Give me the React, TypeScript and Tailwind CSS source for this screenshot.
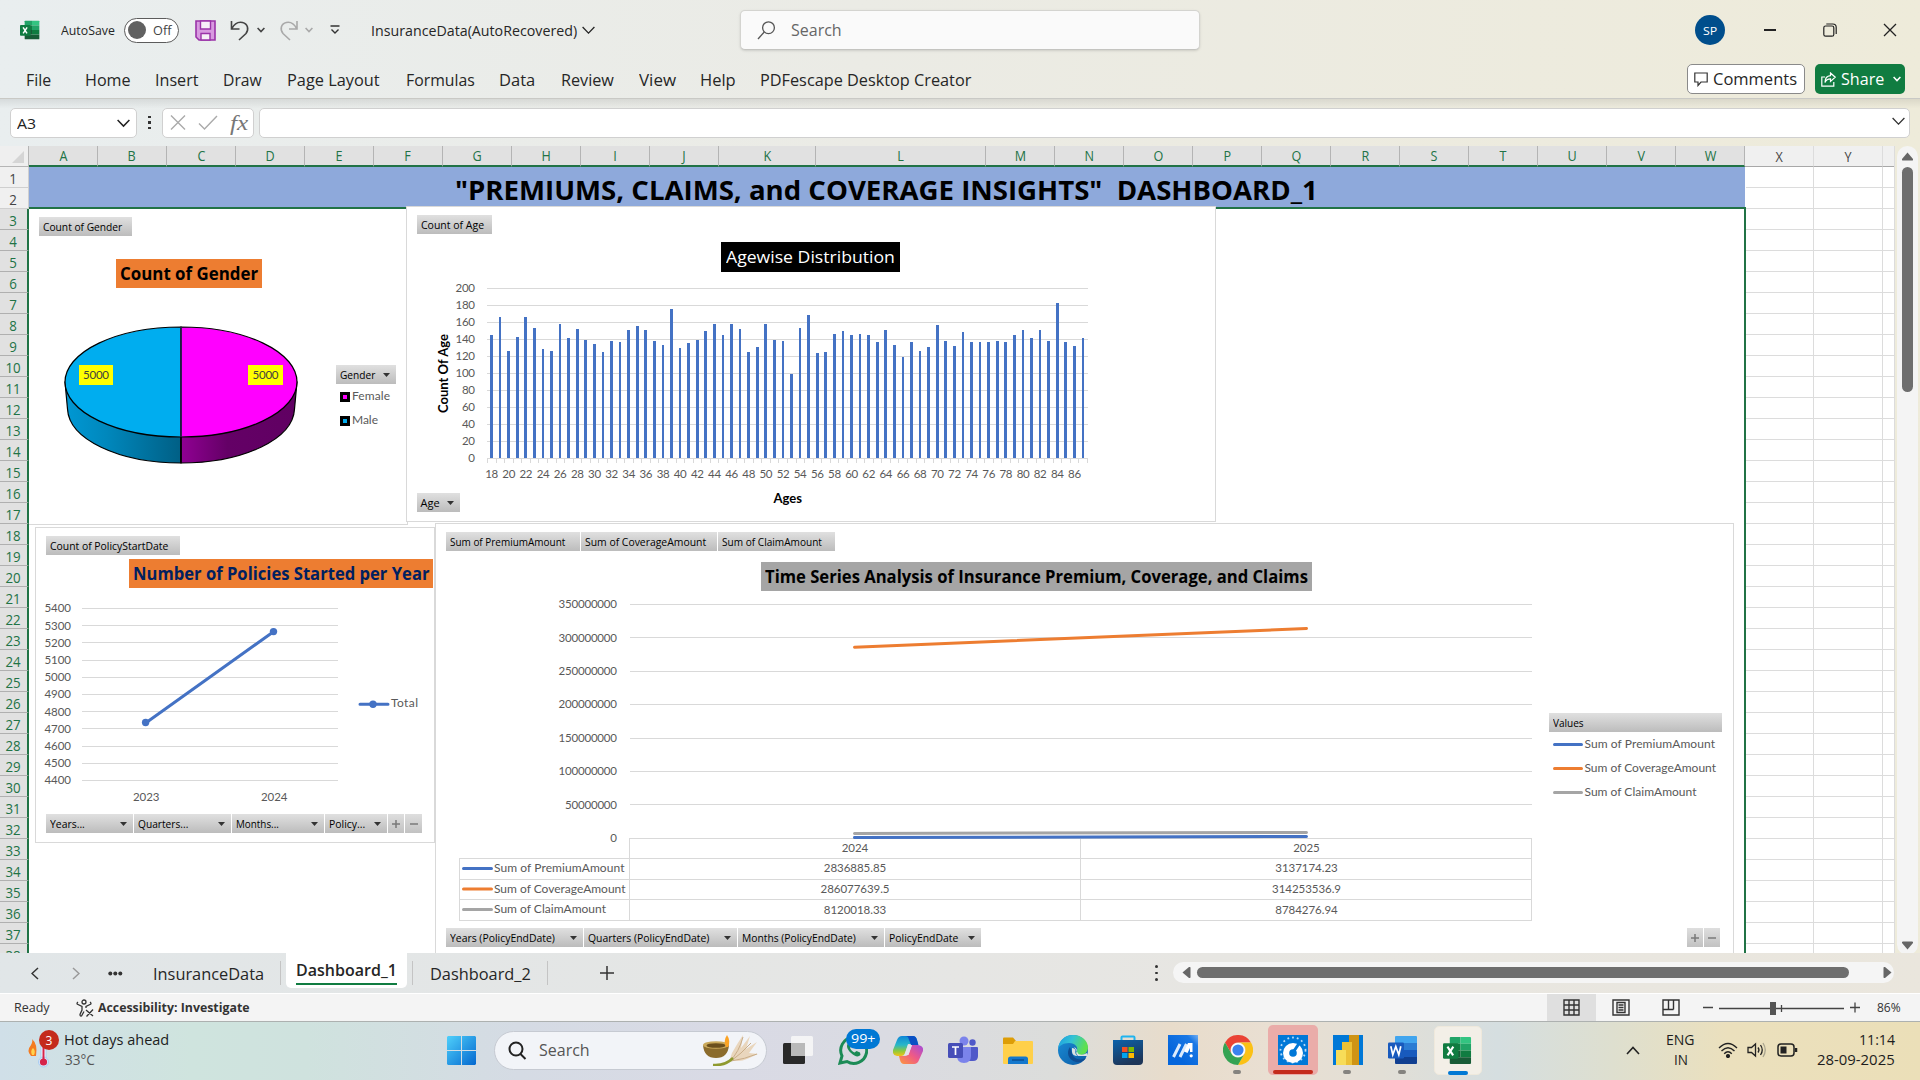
import React, { useLayoutEffect, useRef, useState } from "react";

/* Text squeezed or stretched horizontally to the width of its box. */
function Fit({ className, children }: { className: string; children: React.ReactNode }) {
  const box = useRef<HTMLSpanElement>(null);
  const inner = useRef<HTMLSpanElement>(null);
  const [k, setK] = useState(1);
  useLayoutEffect(() => {
    if (box.current && inner.current) {
      const w = inner.current.offsetWidth;
      if (w) setK(box.current.offsetWidth / w);
    }
  }, []);
  return (
    <span ref={box} className={"block shrink-0 " + className}>
      <span ref={inner} className="inline-block origin-left whitespace-pre" style={{ transform: `scaleX(${k})` }}>
        {children}
      </span>
    </span>
  );
}

function Chevron({ className, w = 12, s = 1.3 }: { className?: string; w?: number; s?: number }) {
  return (
    <svg className={"shrink-0 " + (className ?? "")} width={w} height={w / 2 + 2} viewBox={`0 0 ${w} ${w / 2 + 2}`} fill="none" stroke="currentColor" strokeWidth={s}>
      <path d={`M.6 1 L${w / 2} ${w / 2 + 0.6} L${w - 0.6} 1`} />
    </svg>
  );
}

function ExcelIcon({ size }: { size: number }) {
  return (
    <svg width={size} height={size} viewBox="0 0 30 30" className="shrink-0">
      <path d="M8 1h10v7H7V2q0-1 1-1z" fill="#21a366" />
      <path d="M18 1h10q1 0 1 1v6H18z" fill="#33c481" />
      <path d="M7 8h11v7H7z" fill="#107c41" />
      <path d="M18 8h11v7H18z" fill="#21a366" />
      <path d="M7 15h11v7H7z" fill="#185c37" />
      <path d="M18 15h11v7H18z" fill="#107c41" />
      <path d="M7 22h22v6q0 1-1 1H8q-1 0-1-1z" fill="#185c37" />
      <rect x="0" y="7.5" width="16" height="16" rx="1.3" fill="#107c41" />
      <path d="M4.6 11l5.900 9M10.700 11l-6 9" stroke="#fff" strokeWidth="2.200" />
    </svg>
  );
}

function WordIcon() {
  return (
    <svg width="30" height="30" viewBox="0 0 30 30" className="shrink-0">
      <path d="M8 1h20q1 0 1 1v6H7V2q0-1 1-1z" fill="#41a5ee" />
      <path d="M7 8h22v7H7z" fill="#2b7cd3" />
      <path d="M7 15h22v7H7z" fill="#185abd" />
      <path d="M7 22h22v6q0 1-1 1H8q-1 0-1-1z" fill="#103f91" />
      <rect x="0" y="7.500" width="16" height="16" rx="1.300" fill="#185abd" />
      <path d="M2.800 11.300l2 8.400 3-8.200 3 8.200 2-8.400" stroke="#fff" strokeWidth="1.700" fill="none" />
    </svg>
  );
}

/* ---------- title bar, menu, formula bar ---------- */

function TitleBar() {
  return (
    <div className="flex h-[60px] items-center text-[#262626]">
      <div className="ml-5"><ExcelIcon size={20} /></div>
      <Fit className="ml-[21px] w-[54px] pt-px text-[13px]">AutoSave</Fit>
      <div className="ml-[9px] flex h-[25px] w-[55px] items-center rounded-full border border-[#5c5c5c] bg-white">
        <div className="ml-[3px] size-[18px] rounded-full bg-[#616161]" />
        <Fit className="ml-[7px] w-[18px] pt-px text-[12px] text-[#444]">Off</Fit>
      </div>
      <svg className="ml-4 shrink-0" width="21" height="21" viewBox="0 0 21 21">
        <path d="M1 1h19v19H4l-3-3z" fill="#d89ae0" stroke="#9a33a8" strokeWidth="1.600" />
        <path d="M5.500 1h10v8h-10z" fill="#f7eff8" stroke="#9a33a8" strokeWidth="1.400" />
        <path d="M6 20v-6.500h9V20z" fill="#f7eff8" stroke="#9a33a8" strokeWidth="1.400" />
      </svg>
      <svg className="ml-[14px] shrink-0" width="20" height="21" viewBox="0 0 20 21" fill="none" stroke="#444" strokeWidth="1.600">
        <path d="M1.500 1v8h8M1.800 8.600C4 4.500 8 1.500 12.500 2.500c5.500 1.300 6.500 7 3.500 11L9 20" />
      </svg>
      <Chevron className="ml-[7px] text-[#444]" w={8} s={1.6} />
      <svg className="ml-[14px] shrink-0" width="20" height="21" viewBox="0 0 20 21" fill="none" stroke="#a9a9a9" strokeWidth="1.600">
        <path d="M18 1v8h-8M17.700 8.600C15.500 4.500 11.500 1.500 7.300 2.500c-5.500 1.300-6.500 7-3.300 11L11 20" />
      </svg>
      <Chevron className="ml-[6px] text-[#a9a9a9]" w={8} s={1.6} />
      <svg className="ml-[17px] shrink-0" width="10" height="10" viewBox="0 0 10 10" fill="none" stroke="#333" strokeWidth="1.400">
        <path d="M0.500 1h9M1.500 4.500l3.500 3.500 3.500-3.500" />
      </svg>
      <Fit className="ml-[31px] w-[206px] pt-px text-[14.5px]">InsuranceData(AutoRecovered)</Fit>
      <Chevron className="ml-[5px]" w={13} />
      <div className="ml-[145px] flex h-[40px] w-[460px] items-center rounded-[5px] border border-[#d4d4d0] border-b-[#c4c4c0] bg-[#fafafa] shadow-sm">
        <svg className="ml-4 shrink-0" width="19" height="19" viewBox="0 0 19 19" fill="none" stroke="#555" strokeWidth="1.300">
          <circle cx="11.500" cy="6.700" r="5.900" /><path d="M7.300 11L1 18" />
        </svg>
        <Fit className="ml-[15px] w-[51px] text-[16px] leading-[20px] text-[#666]">Search</Fit>
      </div>
      <div className="ml-[495px] flex size-[30px] shrink-0 items-center justify-center rounded-full bg-[#004e8c] text-white">
        <Fit className="w-[14px] pt-px text-[11.5px]">SP</Fit>
      </div>
      <div className="ml-[39px] h-[1.5px] w-[12px] bg-[#222]" />
      <svg className="ml-[47px] shrink-0" width="14" height="14" viewBox="0 0 14 14" fill="none" stroke="#222" strokeWidth="1.200">
        <rect x=".8" y="3" width="10" height="10.200" rx="1.800" /><path d="M3.300 1h6.500q3.400 0 3.400 3.400V11" />
      </svg>
      <svg className="ml-[46px] shrink-0" width="14" height="14" viewBox="0 0 14 14" stroke="#222" strokeWidth="1.300"><path d="M1 1l12 12M13 1L1 13" /></svg>
    </div>
  );
}

function MenuBar() {
  return (
    <div className="flex h-[38px] items-center text-[16.500px] text-[#262626]">
      <div className="flex pt-[2px]">
        <Fit className="ml-[26px] w-[25px]">File</Fit>
        <Fit className="ml-[34px] w-[46px]">Home</Fit>
        <Fit className="ml-[24px] w-[43px]">Insert</Fit>
        <Fit className="ml-[25px] w-[39px]">Draw</Fit>
        <Fit className="ml-[25px] w-[93px]">Page Layout</Fit>
        <Fit className="ml-[26px] w-[69px]">Formulas</Fit>
        <Fit className="ml-[24px] w-[36px]">Data</Fit>
        <Fit className="ml-[26px] w-[53px]">Review</Fit>
        <Fit className="ml-[25px] w-[37px]">View</Fit>
        <Fit className="ml-[24px] w-[36px]">Help</Fit>
        <Fit className="ml-[24px] w-[211px]">PDFescape Desktop Creator</Fit>
      </div>
      <div className="ml-[716px] flex h-[30px] w-[118px] items-center rounded-[5px] border border-[#8a8a8a] bg-white">
        <svg className="ml-[6px] shrink-0" width="14" height="15" viewBox="0 0 14 15" fill="none" stroke="#333" strokeWidth="1.200">
          <path d="M.8 1h12.400v9H7l-3 3.500V10H.8z" />
        </svg>
        <Fit className="ml-[5px] w-[84px]">Comments</Fit>
      </div>
      <div className="ml-[10px] flex h-[30px] w-[90px] items-center rounded-[5px] bg-[#107c41] text-white">
        <svg className="ml-[6px] shrink-0" width="15" height="15" viewBox="0 0 15 15" fill="none" stroke="#fff" strokeWidth="1.200">
          <path d="M4 5H.8v9.200h12V10" /><path d="M9.500 1l4.700 4.200-4.700 4.200V6.800C6.500 6.800 5 8 4 10.500 4 6.500 6 4 9.500 3.700z" />
        </svg>
        <Fit className="ml-[5px] w-[43px]">Share</Fit>
        <Chevron className="ml-[9px]" w={8} s={1.5} />
      </div>
    </div>
  );
}

function FormulaBar() {
  return (
    <div className="flex h-[48px] items-center border-t border-[#c9c9c5] bg-linear-to-b from-black/8 via-transparent via-20% to-transparent">
      <div className="ml-[10px] flex h-[30px] w-[127px] shrink-0 items-center rounded-[5px] border border-[#d0d0d0] bg-white text-[#222]">
        <Fit className="ml-[6px] w-[19px] pt-px text-[15px]">A3</Fit>
        <Chevron className="mt-[2px] ml-[81px]" w={13} s={1.5} />
      </div>
      <div className="ml-[11px] flex flex-col gap-[3px]">
        <i className="size-[2.500px] bg-[#333]" /><i className="size-[2.500px] bg-[#333]" /><i className="size-[2.500px] bg-[#333]" />
      </div>
      <div className="ml-[11px] flex h-[30px] w-[92px] shrink-0 items-center rounded-[5px] border border-[#d0d0d0] bg-white">
        <svg className="ml-[7px] shrink-0" width="16" height="15" viewBox="0 0 16 15" stroke="#aaa" strokeWidth="1.400"><path d="M1 .5l14 14M15 .5L1 14.500" /></svg>
        <svg className="ml-[12px] shrink-0" width="20" height="15" viewBox="0 0 20 15" fill="none" stroke="#aaa" strokeWidth="1.400"><path d="M1 8.500l5.500 5.500L19 1" /></svg>
        <Fit className="ml-[12px] w-[18px] font-[Liberation_Serif] text-[21px] leading-[22px] italic text-[#777]">fx</Fit>
      </div>
      <div className="ml-[5px] flex h-[30px] w-[1651px] items-center justify-end rounded-[5px] border border-[#d0d0d0] bg-white pr-[4px] pb-[3px] text-[#333]">
        <Chevron w={13} s={1.3} />
      </div>
    </div>
  );
}

/* ---------- worksheet ---------- */

const COLS: [string, number][] = "ABCDEFGHIJKLMNOPQRSTUVWXY".split("").map((c) => [c, c === "K" ? 97 : c === "L" ? 170 : 69]);
const ROWS = Array.from({ length: 38 }, (_, i) => i + 1);

function ColumnHeaders() {
  return (
    <div className="flex h-[21px] text-[14px]">
      <div className="flex w-[29px] items-end justify-end border-r border-b border-[#b5b5b5] bg-[#efefef] pr-[4px] pb-[3px]">
        <svg width="12" height="12"><path d="M12 0v12H0z" fill="#d5d5d5" /></svg>
      </div>
      {COLS.map(([c, w]) => {
        const sel = c < "X";
        return (
          <div key={c} style={{ width: w }} className={"flex shrink-0 items-center justify-center border-r " + (sel ? "border-b-2 border-r-[#b4b4b4] border-b-[#217346] bg-[#e1e1e1] text-[#217346]" : "border-b border-r-[#dcdcdc] border-b-[#a8a8a8] bg-[#f0f0f0] text-[#444]")}>
            <span className="scale-x-90">{c}</span>
          </div>
        );
      })}
      <div className="grow border-b border-[#a8a8a8] bg-[#f0f0f0]" />
    </div>
  );
}

function RowHeaders() {
  return (
    <div className="flex w-[29px] shrink-0 flex-col bg-[#e1e1e1] text-[14px]">
      {ROWS.map((r) => (
        <div key={r} className={"flex h-[21px] shrink-0 items-center justify-center border-b " + (r < 3 ? "border-r border-[#cfcfcf] bg-[#f0f0f0] pr-px text-[#444]" : "border-r-2 border-r-[#217346] border-b-[#b0b0b0] text-[#217346]")}>
          <span className="scale-x-95 pt-[2px]">{r}</span>
        </div>
      ))}
    </div>
  );
}

function PivotButton({ className, w, label, arrow }: { className: string; w: string; label: string; arrow?: boolean }) {
  return (
    <div className={"flex h-[19px] shrink-0 items-center bg-linear-to-b from-[#e0e0e0] to-[#bcbcbc] pl-[3.5px] text-[11px] leading-[14px] text-black " + className}>
      <Fit className={w}>{label}</Fit>
      {arrow && <svg className="mr-[6px] ml-auto shrink-0" width="7" height="4"><path d="M0 0h7L3.500 4z" fill="#333" /></svg>}
    </div>
  );
}

function Sign({ minus, className }: { minus?: boolean; className: string }) {
  return (
    <div className={"flex h-[19px] shrink-0 items-center justify-center bg-linear-to-b from-[#dedede] to-[#c2c2c2] " + className}>
      <svg width="8" height="8" stroke="#7a7a7a" strokeWidth="1.500"><path d={minus ? "M0 4h8" : "M0 4h8M4 0v8"} /></svg>
    </div>
  );
}

function ChartTitle({ className, w, children }: { className: string; w: string; children: string }) {
  return (
    <div className={"absolute flex items-center justify-center text-[17px] leading-[24px] " + className}>
      <Fit className={w}>{children}</Fit>
    </div>
  );
}

/* Chart drawings use the window's coordinate system, offset by each panel's viewBox. */
function GenderChart() {
  return (
    <div className="absolute top-[42px] left-0 h-[316px] w-[379px] border-r border-b border-[#d9d9d9] bg-white">
      <svg className="absolute top-0 left-0 font-[Lato]" width="378" height="315" viewBox="29 209 378 315">
        <defs>
          <linearGradient id="m" x1="0" x2="1"><stop offset="0" stopColor="#0098d4" /><stop offset=".35" stopColor="#0088bd" /><stop offset="1" stopColor="#005f85" /></linearGradient>
          <linearGradient id="f" x1="0" x2="1"><stop offset="0" stopColor="#900093" /><stop offset=".4" stopColor="#640066" /><stop offset="1" stopColor="#600062" /></linearGradient>
        </defs>
        <g stroke="#000" strokeWidth="1.200">
          <path d="M65 382L67.500 409C69 439 118 463 181 463V382z" fill="url(#m)" />
          <path d="M297 382L294.500 409C293 439 244 463 181 463V382z" fill="url(#f)" />
          <path d="M181 327A116 55 0 0 0 181 437z" fill="#00adef" />
          <path d="M181 327A116 55 0 0 1 181 437z" fill="#ff00ff" />
        </g>
        <path d="M181 327V437" stroke="#26224d" strokeWidth="1.500" />
        <path d="M181 437V463" stroke="#000" strokeWidth="1.500" />
        <path d="M79 365h34v20H79zM248 365h35v20h-35z" fill="#ff0" />
        <g fontSize="11.500" fill="#404040">
          <text x="83" y="379" textLength="26">5000</text>
          <text x="252.500" y="379" textLength="26">5000</text>
        </g>
        <g fontSize="12" fill="#595959">
          <text x="352" y="400" textLength="38">Female</text>
          <text x="352" y="424" textLength="26">Male</text>
        </g>
        <rect x="341.500" y="393.500" width="7" height="7" fill="#f0f" stroke="#000" strokeWidth="3" />
        <rect x="341.500" y="417.500" width="7" height="7" fill="#00adef" stroke="#000" strokeWidth="3" />
      </svg>
      <PivotButton className="absolute top-[8px] left-[10px] w-[93px]" w="w-[79px]" label="Count of Gender" />
      <ChartTitle className="top-[50px] left-[87px] h-[29px] w-[146px] bg-[#ed7d31] font-bold text-black" w="w-[138px]">Count of Gender</ChartTitle>
      <PivotButton className="absolute top-[156px] left-[307px] w-[60px]" w="w-[35px]" label="Gender" arrow />
    </div>
  );
}

const AGES = [
  145, 167, 127, 143, 166, 153, 129, 126, 158, 142, 152, 139, 135, 125, 138, 137, 151, 156, 151, 138, 133, 176, 130, 136, 140, 150, 158, 145, 158, 152, 125, 131, 158, 139, 138,
  100, 153, 169, 124, 125, 147, 150, 145, 147, 145, 137, 151, 133, 120, 137, 127, 131, 157, 138, 132, 149, 137, 137, 137, 138, 137, 145, 151, 142, 151, 138, 183, 137, 132, 142,
];

function AgeChart() {
  const step = 600 / 70;
  return (
    <div className="absolute top-[39px] left-[377px] h-[316px] w-[810px] border border-[#d9d9d9] bg-white">
      <svg className="absolute top-0 left-0 font-[Lato]" width="808" height="314" viewBox="407 207 808 314">
        <g stroke="#d9d9d9" shapeRendering="crispEdges">
          {AGES.slice(0, 11).map((_, i) => <path key={i} d={`M487 ${288.500 + i * 17}H1087.500`} />)}
          {Array.from({ length: 71 }, (_, i) => <path key={i} d={`M${487.500 + i * step} 459v4`} />)}
        </g>
        <g fill="#4472c4" shapeRendering="crispEdges">
          {AGES.map((v, i) => <rect key={i} x={487.200 + step * (i + 0.5) - 1.350} y={458.500 - v * 0.850} width="2.700" height={v * 0.850 - 0.500} />)}
        </g>
        <g fontSize="11.500" fill="#595959">
          {Array.from({ length: 11 }, (_, i) => {
            const s = String(200 - i * 20);
            return <text key={i} x="475" y={292.300 + i * 17} textAnchor="end" textLength={s.length * 6.500}>{s}</text>;
          })}
          {Array.from({ length: 35 }, (_, i) => <text key={i} x={491.700 + i * step * 2} y="478" textAnchor="middle" textLength="13">{18 + i * 2}</text>)}
        </g>
        <g fontSize="13" fontWeight="bold" fill="#000">
          <text transform="translate(448 413) rotate(-90)" textLength="79" lengthAdjust="spacingAndGlyphs">Count Of Age</text>
          <text x="773.500" y="503" textLength="28.500" lengthAdjust="spacingAndGlyphs">Ages</text>
        </g>
      </svg>
      <PivotButton className="absolute top-[8px] left-[10px] w-[75px]" w="w-[63px]" label="Count of Age" />
      <ChartTitle className="top-[35px] left-[314px] h-[30px] w-[179px] bg-black text-white" w="w-[169px]">Agewise Distribution</ChartTitle>
      <PivotButton className="absolute top-[286px] left-[10px] w-[43px]" w="w-[19px]" label="Age" arrow />
    </div>
  );
}

function PolicyChart() {
  return (
    <div className="absolute top-[360px] left-[6px] h-[316px] w-[400px] border border-[#d9d9d9] bg-white">
      <svg className="absolute top-0 left-0 font-[Lato]" width="398" height="314" viewBox="36 528 398 314">
        <g stroke="#d9d9d9" shapeRendering="crispEdges">
          {AGES.slice(0, 11).map((_, i) => <path key={i} d={`M82 ${608.500 + i * 17.200}H337.500`} />)}
        </g>
        <g fontSize="11.500" fill="#595959">
          {AGES.slice(0, 11).map((_, i) => <text key={i} x="44.500" y={612.300 + i * 17.200} textLength="26.500">{5400 - i * 100}</text>)}
          <text x="133" y="801" textLength="26.500">2023</text>
          <text x="261" y="801" textLength="26.500">2024</text>
          <text x="391" y="707.200" fontSize="12" textLength="27">Total</text>
        </g>
        <path d="M146 722.800L273.800 631.500M360 704.300h28" stroke="#4472c4" strokeWidth="3" strokeLinecap="round" />
        <g fill="#4472c4"><circle cx="145.600" cy="722.500" r="3.700" /><circle cx="273.500" cy="631.600" r="3.700" /><circle cx="373" cy="704.300" r="3.700" /></g>
      </svg>
      <PivotButton className="absolute top-[8px] left-[10px] w-[134px]" w="w-[118px]" label="Count of PolicyStartDate" />
      <ChartTitle className="top-[31px] left-[93px] h-[29px] w-[304px] bg-[#ed7d31] font-bold text-[#002060]" w="w-[296px]">Number of Policies Started per Year</ChartTitle>
      <div className="absolute top-[286px] left-[10px] flex gap-px">
        <PivotButton className="w-[87px]" w="w-[35px]" label="Years..." arrow />
        <PivotButton className="w-[97px]" w="w-[50px]" label="Quarters..." arrow />
        <PivotButton className="w-[92px]" w="w-[43px]" label="Months..." arrow />
        <PivotButton className="w-[62px]" w="w-[36px]" label="Policy..." arrow />
        <Sign className="w-[16px]" />
        <Sign className="w-[17px]" minus />
      </div>
    </div>
  );
}

const SERIES: [string, string, string, string, number][] = [
  ["Sum of PremiumAmount", "#4472c4", "2836885.85", "3137174.23", 130.5],
  ["Sum of CoverageAmount", "#ed7d31", "286077639.5", "314253536.9", 131.5],
  ["Sum of ClaimAmount", "#a5a5a5", "8120018.33", "8784276.94", 112],
];

function TimeChart() {
  return (
    <div className="absolute top-[356px] left-[406px] h-[440px] w-[1299px] border border-[#d9d9d9] bg-white">
      <svg className="absolute top-0 left-0 font-[Lato]" width="1297" height="430" viewBox="436 524 1297 430">
        <g stroke="#d9d9d9" fill="none" shapeRendering="crispEdges">
          {AGES.slice(0, 8).map((_, i) => <path key={i} d={`M629.500 ${604.500 + i * 33.400}H1531.500`} />)}
          <path d="M459 858.500H1531.500M459 879.500H1531.500M459 899.500H1531.500M459 920.500H1531.500M459.500 858V921M629.500 838V921M1080.500 838V921M1531.500 838V921" />
        </g>
        <g fontSize="11.500" fill="#595959">
          {Array.from({ length: 8 }, (_, i) => {
            const s = String(350000000 - i * 50000000);
            return <text key={i} x="617" y={608.200 + i * 33.400} textAnchor="end" textLength={s.length * 6.500}>{s}</text>;
          })}
          <text x="855" y="852" textAnchor="middle" textLength="26.500">2024</text>
          <text x="1306.500" y="852" textAnchor="middle" textLength="26.500">2025</text>
          {SERIES.map(([n, c, a, b, w], i) => (
            <g key={n}>
              <path d={`M463.500 ${868.500 + i * 20.500}h28M1554.500 ${744.500 + i * 24}h27`} stroke={c} strokeWidth="3" strokeLinecap="round" />
              <text x="494" y={872 + i * 20.500} fontSize="12" textLength={w}>{n}</text>
              <text x="1584.500" y={748 + i * 24} fontSize="12" textLength={w}>{n}</text>
              <text x="855" y={872 + i * 20.900} textAnchor="middle" textLength={i === 1 ? 69 : 62.500}>{a}</text>
              <text x="1306.500" y={872 + i * 20.900} textAnchor="middle" textLength={i === 1 ? 69 : 62.500}>{b}</text>
            </g>
          ))}
        </g>
        <g fill="none" strokeWidth="3" strokeLinecap="round">
          <path d="M854.500 837.500L1306.500 836.500" stroke="#4472c4" />
          <path d="M854.500 647.300L1306.500 628.500" stroke="#ed7d31" />
          <path d="M854.500 833.400L1306.500 832.500" stroke="#a5a5a5" />
        </g>
      </svg>
      <div className="absolute top-[8px] left-[10px] flex gap-px">
        <PivotButton className="w-[134px]" w="w-[115px]" label="Sum of PremiumAmount" />
        <PivotButton className="w-[136px]" w="w-[121px]" label="Sum of CoverageAmount" />
        <PivotButton className="w-[117px]" w="w-[100px]" label="Sum of ClaimAmount" />
      </div>
      <ChartTitle className="top-[38px] left-[325px] h-[29px] w-[551px] bg-[#a5a5a5] font-bold text-black" w="w-[543px]">Time Series Analysis of Insurance Premium, Coverage, and Claims</ChartTitle>
      <PivotButton className="absolute top-[189px] left-[1113px] w-[173px]" w="w-[31px]" label="Values" />
      <div className="absolute top-[404px] left-[10px] flex gap-px">
        <PivotButton className="w-[137px]" w="w-[105px]" label="Years (PolicyEndDate)" arrow />
        <PivotButton className="w-[153px]" w="w-[121px]" label="Quarters (PolicyEndDate)" arrow />
        <PivotButton className="w-[146px]" w="w-[114px]" label="Months (PolicyEndDate)" arrow />
        <PivotButton className="w-[96px]" w="w-[69px]" label="PolicyEndDate" arrow />
      </div>
      <div className="absolute top-[404px] left-[1251px] flex gap-px">
        <Sign className="w-[16px]" /><Sign className="w-[16px]" minus />
      </div>
    </div>
  );
}

function Sheet() {
  return (
    <div className="flex h-[807px] w-[1895px] shrink-0 flex-col overflow-hidden border-r border-[#dcdcdc] bg-white">
      <ColumnHeaders />
      <div className="flex h-[786px] overflow-hidden">
        <RowHeaders />
        <div className="relative w-[1717px] shrink-0 overflow-hidden bg-white">
          <div className="flex h-[40px] w-[1716px] items-center bg-[#8ea9db] pl-[426px]">
            <Fit className="w-[863px] pt-[5px] text-[27.500px] leading-[36px] font-bold text-black">{'"PREMIUMS, CLAIMS, and COVERAGE INSIGHTS"  DASHBOARD_1'}</Fit>
          </div>
          <div className="h-[750px] border-t-2 border-r-2 border-[#217346]" />
          <TimeChart />
          <GenderChart />
          <PolicyChart />
          <AgeChart />
        </div>
        <div className="flex grow flex-col">
          {ROWS.map((r) => (
            <div key={r} className="flex h-[21px] shrink-0 border-b border-[#dcdcdc]">
              <div className="w-[68px] border-r border-[#dcdcdc]" /><div className="w-[69px] border-r border-[#dcdcdc]" />
            </div>
          ))}
        </div>
      </div>
    </div>
  );
}

function VScroll() {
  return (
    <div className="ml-[2px] flex h-[809px] w-[21px] flex-col items-center rounded-full bg-[#f4f4f4] pt-[6px] pb-[5px]">
      <svg width="11" height="9"><path d="M5.500 .5L11 7q.3 1.500-1 1.500H1Q-.3 8.500 0 7z" fill="#666" /></svg>
      <div className="mt-[6px] h-[225px] w-[11px] rounded-full bg-[#6e6e6e]" />
      <svg className="mt-auto" width="11" height="9"><path d="M5.500 8.500L11 2Q11.300 .5 10 .5H1Q-.3 .5 0 2z" fill="#666" /></svg>
    </div>
  );
}

function TabStrip() {
  return (
    <div className="flex h-[40px] items-start bg-linear-to-r from-[#e1e6e8] via-[#e6e6e4] to-[#eae6dd] text-[#262626]">
      <div className="flex h-[40px] items-center">
        <svg className="ml-[31px]" width="8" height="13" fill="none" stroke="#333" strokeWidth="1.500"><path d="M7 1L1 6.500l6 5.500" /></svg>
        <svg className="ml-[33px]" width="8" height="13" fill="none" stroke="#999" strokeWidth="1.500"><path d="M1 1l6 5.500L1 12" /></svg>
        <svg className="ml-[28px]" width="15" height="5" fill="#333"><circle cx="2.300" cy="2.500" r="2" /><circle cx="7.300" cy="2.500" r="2" /><circle cx="12.300" cy="2.500" r="2" /></svg>
        <Fit className="ml-[30px] w-[111px] pt-[2px] text-[16.500px]">InsuranceData</Fit>
        <div className="ml-[16px] h-[24px] w-px bg-[#c4c4c4]" />
      </div>
      <div className="ml-[5px] flex h-[35px] w-[121px] flex-col items-center rounded-b-[5px] bg-white pt-[5px]">
        <Fit className="w-[101px] text-[16.500px] leading-[24px] font-semibold">Dashboard_1</Fit>
        <div className="mt-[1px] h-[2px] w-[101px] shrink-0 bg-[#107c41]" />
      </div>
      <div className="flex h-[40px] grow items-center">
        <div className="ml-[5px] h-[24px] w-px bg-[#c4c4c4]" />
        <Fit className="ml-[17px] w-[101px] pt-[2px] text-[16.500px]">Dashboard_2</Fit>
        <div className="ml-[16px] h-[24px] w-px bg-[#c4c4c4]" />
        <svg className="ml-[52px]" width="14" height="14" stroke="#333" strokeWidth="1.500"><path d="M0 7h14M7 0v14" /></svg>
        <div className="ml-[541px] flex flex-col gap-[4px]">
          <i className="size-[2.500px] rounded-full bg-[#333]" /><i className="size-[2.500px] rounded-full bg-[#333]" /><i className="size-[2.500px] rounded-full bg-[#333]" />
        </div>
        <div className="mb-[2px] ml-[15px] flex h-[21px] w-[721px] items-center rounded-full bg-[#f5f5f5]">
          <svg className="ml-[9px]" width="9" height="11"><path d="M.5 5.500L7 0q1.500-.3 1.500 1v9q0 1.300-1.500 1z" fill="#666" /></svg>
          <div className="ml-[6px] h-[11px] w-[652px] rounded-full bg-[#6e6e6e]" />
          <svg className="ml-[34px]" width="9" height="11"><path d="M8.500 5.500L2 0Q.5-.3 .5 1v9q0 1.300 1.500 1z" fill="#666" /></svg>
        </div>
      </div>
    </div>
  );
}

function StatusBar() {
  return (
    <div className="flex h-[28px] items-center border-t border-white bg-[#f4f4f4] text-[12.500px] text-[#333]">
      <Fit className="ml-[14px] w-[36px] pt-px">Ready</Fit>
      <svg className="ml-[26px]" width="18" height="18" viewBox="0 0 18 18" fill="none" stroke="#333" strokeWidth="1.300">
        <circle cx="8" cy="3" r="2" /><path d="M2 3Q0 4.500 2 5.500L6 7.500V11L4 15.500q0 2 1.500 1.500L8 12.500M14 3q2 1.500 0 2.500L10 7.500V9M10 11l7 6M17 10.500L10.500 17.500" />
      </svg>
      <Fit className="ml-[4px] w-[152px] pt-px font-bold">Accessibility: Investigate</Fit>
      <div className="ml-[1297px] flex h-full w-[49px] items-center justify-center bg-[#dfdfdf]">
        <svg width="17" height="17" fill="none" stroke="#333" strokeWidth="1.400"><path d="M1 1h15v15H1zM6 1v15M11 1v15M1 6h15M1 11h15" /></svg>
      </div>
      <svg className="ml-[16px]" width="18" height="17" fill="none" stroke="#333" strokeWidth="1.400"><path d="M1 1h16v15H1zM5 3.500h8v10H5zM6.500 6h5M6.500 8.500h5M6.500 11h5" /></svg>
      <svg className="ml-[32px]" width="18" height="17" fill="none" stroke="#333" strokeWidth="1.400"><path d="M1 1h16v15H1zM1 10.500h10.500M6.500 1v9.500M11.500 1v9.500" /></svg>
      <svg className="ml-[23px]" width="157" height="18" stroke="#444" strokeWidth="1.300">
        <path d="M0 8.500h10M16 9.500h125M78.500 6v7M147 8.500h10M152 3.500v10" /><path d="M67 3h6v13h-6z" fill="#555" stroke="none" />
      </svg>
      <Fit className="ml-[17px] w-[24px] pt-px">86%</Fit>
    </div>
  );
}

/* ---------- taskbar ---------- */

function Running({ children }: { children: React.ReactNode }) {
  return (
    <div className="relative flex h-[50px] w-[55px] shrink-0 items-center justify-center">
      {children}
      <div className="absolute top-[45px] left-[23px] h-[4px] w-[8px] rounded-full bg-[#85837f]" />
    </div>
  );
}
function TaskSlot({ children }: { children: React.ReactNode }) {
  return <div className="relative flex h-[50px] w-[55px] shrink-0 items-center justify-center">{children}</div>;
}

function Taskbar() {
  return (
    <div className="flex h-[59px] items-center border-t border-[#adb1b0] bg-[linear-gradient(90deg,#d0dfe8_0%,#cfe4de_10%,#cfe2de_16%,#d5dbe4_27%,#d9dae5_38%,#dadbe2_46%,#dcdddb_55%,#e8dccb_61%,#e9dfd2_66%,#e2dfd6_72%,#d5dee0_78%,#dedfcf_84%,#ebe0bd_90%,#ebdfb8_100%)] pb-[2px] text-[#1d1d1d]">
      <svg className="mt-[-3px] ml-[26px] shrink-0" width="34" height="44" viewBox="0 0 34 44">
        <path d="M5 29Q0 24 5 18 7 14 6 12 12 17 10 29z" fill="#f47b20" /><path d="M6 28q-2-4 1-7 3 3 1 7z" fill="#ffd34d" />
        <rect x="15" y="13" width="5" height="20" rx="2.500" fill="#f6f9ff" stroke="#a9cdf2" /><circle cx="17.500" cy="35" r="5" fill="#dbeafd" stroke="#a9cdf2" /><circle cx="17.500" cy="35" r="3.600" fill="#d6234a" /><path d="M17.500 19v15" stroke="#d6234a" strokeWidth="2" />
        <circle cx="23" cy="13" r="10" fill="#c42b1c" />
        <text x="23" y="17.500" textAnchor="middle" fontSize="12" fill="#fff">3</text>
      </svg>
      <div className="ml-[4px] flex flex-col text-[14.500px] leading-[20px]">
        <Fit className="w-[105px]">Hot days ahead</Fit>
        <Fit className="ml-px w-[30px] text-[#555]">33°C</Fit>
      </div>
      <svg className="ml-[278px] shrink-0" width="29" height="29" viewBox="0 0 29 29">
        <defs><linearGradient id="w" x2="1" y2="1"><stop stopColor="#4fd0fb" /><stop offset="1" stopColor="#0468cf" /></linearGradient></defs>
        <path d="M1 0h13v14H0V1zM15 0h13l1 1v13H15zM0 15h14v14H1l-1-1zM15 15h14v13l-1 1H15z" fill="url(#w)" />
      </svg>
      <div className="ml-[18px] flex h-[39px] w-[273px] shrink-0 items-center rounded-full border border-[#c6cad2] bg-[#f2f4f8]">
        <svg className="ml-[13px]" width="19" height="19" fill="none" stroke="#222" strokeWidth="2"><circle cx="8" cy="8" r="6.500" /><path d="M12.500 13l5 5" /></svg>
        <Fit className="ml-[12px] w-[51px] text-[16px] text-[#555]">Search</Fit>
        <svg className="ml-[113px]" width="56" height="32" viewBox="0 0 56 32">
          <path d="M29 19Q34 10 40 1L38 14 47 2 43 15 54 8 46 19 55 20 44 25Q35 29 27 25z" fill="#e9d6bd" />
          <path d="M27 27Q36 18 40 3M28 27Q38 20 48 9M28 27Q42 25 54 20" stroke="#c9ad89" fill="none" />
          <path d="M10 31q12 1 20-7" stroke="#8f9a2f" strokeWidth="2.500" fill="none" />
          <path d="M0 11q13 6 26 0-1 13-13 13T0 11z" fill="#8b6b2c" /><ellipse cx="13" cy="11" rx="13" ry="3.800" fill="#caa95b" /><ellipse cx="13" cy="11.500" rx="9.500" ry="2.300" fill="#6b4f1d" />
          <path d="M23 13q-3-6 1-12 4 6 1 12z" fill="#fba324" />
        </svg>
      </div>
      <div className="ml-[3px] flex items-center">
        <TaskSlot>
          <svg width="30" height="30" viewBox="0 0 30 30"><rect x="0" y="8" width="22" height="21" rx="1.500" fill="#292929" /><rect x="8" y="1" width="22" height="20" rx="1.500" fill="#f6f6f6" fillOpacity=".92" /><path d="M8 8h14v13H8z" fill="#b9b9b9" /></svg>
        </TaskSlot>
        <TaskSlot>
          <svg width="30" height="30" viewBox="0 0 30 30" fill="none"><path d="M2 28l2-7A13 13 0 1 1 9 26.500z" stroke="#1c8b56" strokeWidth="3" /><path d="M10 8.500c-2 2-1 6 3 9.500s7 4.500 9.500 2l-.5-2.500-3.500-1.500-2 1.500c-2-1-3.500-2.500-4.500-4.500l1.500-2-1.500-3z" fill="#1c8b56" /></svg>
          <div className="absolute top-[4px] left-[21px] flex h-[20px] w-[34px] items-center justify-center rounded-full bg-[#0078d4] text-white"><Fit className="w-[24px] text-[12.500px]">99+</Fit></div>
        </TaskSlot>
        <TaskSlot>
          <svg width="30" height="28" viewBox="0 0 30 28">
            <defs>
              <linearGradient id="c1" x1="0" y1="0" x2="0" y2="1"><stop stopColor="#0e87d8" /><stop offset=".45" stopColor="#28b7c8" /><stop offset=".75" stopColor="#8fc93a" /><stop offset="1" stopColor="#f3c316" /></linearGradient>
              <linearGradient id="c2" x1="1" y1="0" x2="0" y2="1"><stop stopColor="#a24bdc" /><stop offset=".5" stopColor="#ef5a86" /><stop offset="1" stopColor="#fd9a3a" /></linearGradient>
            </defs>
            <path d="M9 0h11q3 0 4 4l1 4h-6l-4 0-3 9q-1 3-4 3H4q-5-1-4-6L4 4q1.500-4 5-4z" fill="url(#c1)" />
            <path d="M12 0h8q3 0 4 4l1.500 5H18L15 1q-1-1-3-1z" fill="#0a50c4" />
            <path d="M21 28H11q-3 0-4-4l-1-4h6q3 0 4-3l3-8h6q6 1 5 6l-4 9q-1.500 4-5 4z" fill="url(#c2)" />
            <path d="M15 9h4l-3.500 10h-4z" fill="#e4e2ea" />
          </svg>
        </TaskSlot>
        <TaskSlot>
          <svg width="30" height="28" viewBox="0 0 30 28">
            <circle cx="24.500" cy="6.500" r="3.200" fill="#5059c9" /><path d="M20 11h9q1 0 1 1v8q0 5-5 5h-5z" fill="#5059c9" />
            <circle cx="16" cy="5" r="4.500" fill="#7b83eb" /><path d="M9 11h14v9q0 7-7 7t-7-7z" fill="#7b83eb" />
            <rect x="0" y="7" width="15" height="15" rx="1.500" fill="#464eb8" /><path d="M4 11h7M7.500 11v8" stroke="#fff" strokeWidth="1.700" />
          </svg>
        </TaskSlot>
        <TaskSlot>
          <svg width="30" height="27" viewBox="0 0 30 27">
            <path d="M0 1.500Q0 .5 1 .5h9l3 3.500v5H0z" fill="#dd9d07" /><path d="M0 7h10l2-3h17q1 0 1 1v21q0 1-1 1H1q-1 0-1-1z" fill="#ffd04a" />
            <path d="M5 27v-5q0-2.500 2.500-2.500h15Q25 19.500 25 22v5z" fill="#1478cd" /><path d="M9 23h12" stroke="#0b4f92" strokeWidth="1.500" />
          </svg>
        </TaskSlot>
        <TaskSlot>
          <svg width="30" height="30" viewBox="0 0 30 30">
            <defs><linearGradient id="e1" x1="0" x2="1" y2=".3"><stop stopColor="#1b9de2" /><stop offset=".5" stopColor="#34c3d4" /><stop offset="1" stopColor="#5fe04e" /></linearGradient><linearGradient id="e2" y2="1" x2="1"><stop stopColor="#1b8fd8" /><stop offset="1" stopColor="#0c59a4" /></linearGradient></defs>
            <circle cx="15" cy="15" r="15" fill="url(#e2)" />
            <path d="M0 14C1 5 7 0 15 0c9 0 15 6 15 12.500 0 5-4 7.500-8 7.500-3 0-4.500-1.500-3.500-3C21 12 17 8 11 8 5 8 1 11 0 14z" fill="url(#e1)" />
            <path d="M12 12c-4 5-2 13 6 15 5 1 8-1 10-4-6 3-13 1-14-5z" fill="#0f4d93" /><path d="M16 12q4 2 2.500 5-1 2 1.500 4h8l2 1-1-4q-5 3-8.500 1z" fill="#dde0e2" /><path d="M14 13q3 0 3.500 2.500-1 3 2 5.500-5 0-5.500-4z" fill="#dde0e2" />
          </svg>
        </TaskSlot>
        <TaskSlot>
          <svg width="30" height="30" viewBox="0 0 30 30">
            <defs><linearGradient id="s" y2="1" x2=".4"><stop stopColor="#0b62ab" /><stop offset="1" stopColor="#1d3558" /></linearGradient></defs>
            <path d="M8.500 6V2.500q0-1 1-1h11q1 0 1 1V6" fill="none" stroke="#1fb4ef" strokeWidth="2" /><path d="M0 5h30v21q0 4-4 4H4q-4 0-4-4z" fill="url(#s)" />
            <path d="M9 12h5.500v5H9z" fill="#f25022" /><path d="M15.500 12H21v5h-5.500z" fill="#7fba00" /><path d="M9 18h5.500v5H9z" fill="#00a4ef" /><path d="M15.500 18H21v5h-5.500z" fill="#ffb900" />
          </svg>
        </TaskSlot>
        <TaskSlot>
          <svg width="30" height="30" viewBox="0 0 30 30"><defs><linearGradient id="ma" y1="1" x2="1" y2="0"><stop offset=".3" stopColor="#0566dc" /><stop offset=".8" stopColor="#1a78e5" /><stop offset="1" stopColor="#71aef2" /></linearGradient></defs><path d="M0 0h30v30H0z" fill="url(#ma)" /><path d="M5.500 22L12 9M12 22L18.500 9" stroke="#dcebfc" strokeWidth="3" fill="none" /><path d="M16 16.500l4-8.500h4.500V17H22v-4l-2.500 5z" fill="#fff" /><circle cx="23.200" cy="20.800" r="1.600" fill="#fff" /></svg>
        </TaskSlot>
        <Running>
          <svg width="30" height="30" viewBox="0 0 30 30"><path d="M2 7.500A15 15 0 0 1 28 7.500H15A7.500 7.500 0 0 0 8.500 18.700z" fill="#ea4335" /><path d="M28 7.500A15 15 0 0 1 15 30L21.500 18.700A7.500 7.500 0 0 0 15 7.500z" fill="#fbc116" /><path d="M2 7.500A15 15 0 0 0 15 30L21.500 18.700A7.500 7.500 0 0 1 8.500 18.700z" fill="#34a353" /><circle cx="15" cy="15" r="7" fill="#fff" /><circle cx="15" cy="15" r="5.600" fill="#3b82ee" /></svg>
        </Running>
        <TaskSlot>
          <div className="flex h-[50px] w-[50px] flex-col items-center rounded-[5px] bg-[#eaaca9] pt-[10px]">
            <svg width="30" height="30" viewBox="0 0 30 30"><path d="M0 0h30v30H0z" fill="#0078d7" /><circle cx="15" cy="15" r="12.500" fill="none" stroke="#b9dcf8" strokeWidth="1.800" strokeDasharray="1.800 3" /><circle cx="15" cy="18" r="10" fill="#fff" /><circle cx="15" cy="18" r="3.800" fill="#0078d7" /><path d="M16 16L22 7" stroke="#0078d7" strokeWidth="3" /></svg>
            <div className="mt-[5px] h-[4px] w-[40px] rounded-full bg-[#c42b1c]" />
          </div>
        </TaskSlot>
        <Running>
          <svg width="30" height="30" viewBox="0 0 30 30"><path d="M0 0h30v30H0z" fill="#0078d7" /><path d="M16 0h10v30H16z" fill="#cf9415" /><path d="M9 7h10v23H9z" fill="#ecc136" /><path d="M3 15h10v15H3z" fill="#f7dc58" /></svg>
        </Running>
        <Running><WordIcon /></Running>
        <TaskSlot>
          <div className="flex h-[49px] w-[48px] flex-col items-center rounded-[5px] border border-[#efe9dc] bg-[#f3efe7] pt-[9px]">
            <ExcelIcon size={29} />
            <div className="mt-[6px] h-[4px] w-[20px] shrink-0 rounded-full bg-[#0078d4]" />
          </div>
        </TaskSlot>
      </div>
      <svg className="ml-[141px] shrink-0" width="14" height="9" fill="none" stroke="#222" strokeWidth="1.600"><path d="M1 8l6-6.500L13 8" /></svg>
      <div className="ml-[26px] flex flex-col items-center text-[14.500px] leading-[20px]">
        <Fit className="w-[29px]">ENG</Fit>
        <Fit className="w-[14px]">IN</Fit>
      </div>
      <svg className="ml-[23px] shrink-0" width="20" height="16" fill="none" stroke="#222" strokeWidth="1.400"><path d="M1 6q9-9 18 0M3.500 9q6.500-6.500 13 0M6.200 11.700q3.800-3.800 7.600 0" /><circle cx="10" cy="14" r="1.400" fill="#222" /></svg>
      <svg className="ml-[9px] shrink-0" width="20" height="18" fill="none" stroke="#222" strokeWidth="1.300"><path d="M1 6.500h3.500L8.500 3v12l-4-3.500H1zM11 6.500q2 2.500 0 5M13.500 4q3.500 5 0 10" /><path d="M16 2q4.500 7 0 14" stroke="#aaa58f" /></svg>
      <svg className="ml-[10px] shrink-0" width="21" height="14" fill="none" stroke="#222" strokeWidth="1.500"><rect x="1" y="1" width="16" height="12" rx="3" /><path d="M3.500 3.500h6v7h-6z" fill="#222" stroke="none" /><path d="M19 5v4" strokeWidth="2.500" /></svg>
      <div className="ml-[19px] flex flex-col items-end text-[14.500px] leading-[20px]">
        <Fit className="w-[36px]">11:14</Fit>
        <Fit className="w-[78px]">28-09-2025</Fit>
      </div>
    </div>
  );
}

export default function App() {
  return (
    <div className="flex h-[1080px] w-[1920px] flex-col overflow-hidden bg-linear-to-r from-[#e9eeef] via-[#ebebe5] via-45% to-[#eeebda] font-['Open_Sans','Noto_Sans',sans-serif]">
      <TitleBar />
      <MenuBar />
      <FormulaBar />
      <div className="flex h-[807px]"><Sheet /><VScroll /></div>
      <TabStrip />
      <StatusBar />
      <Taskbar />
    </div>
  );
}
